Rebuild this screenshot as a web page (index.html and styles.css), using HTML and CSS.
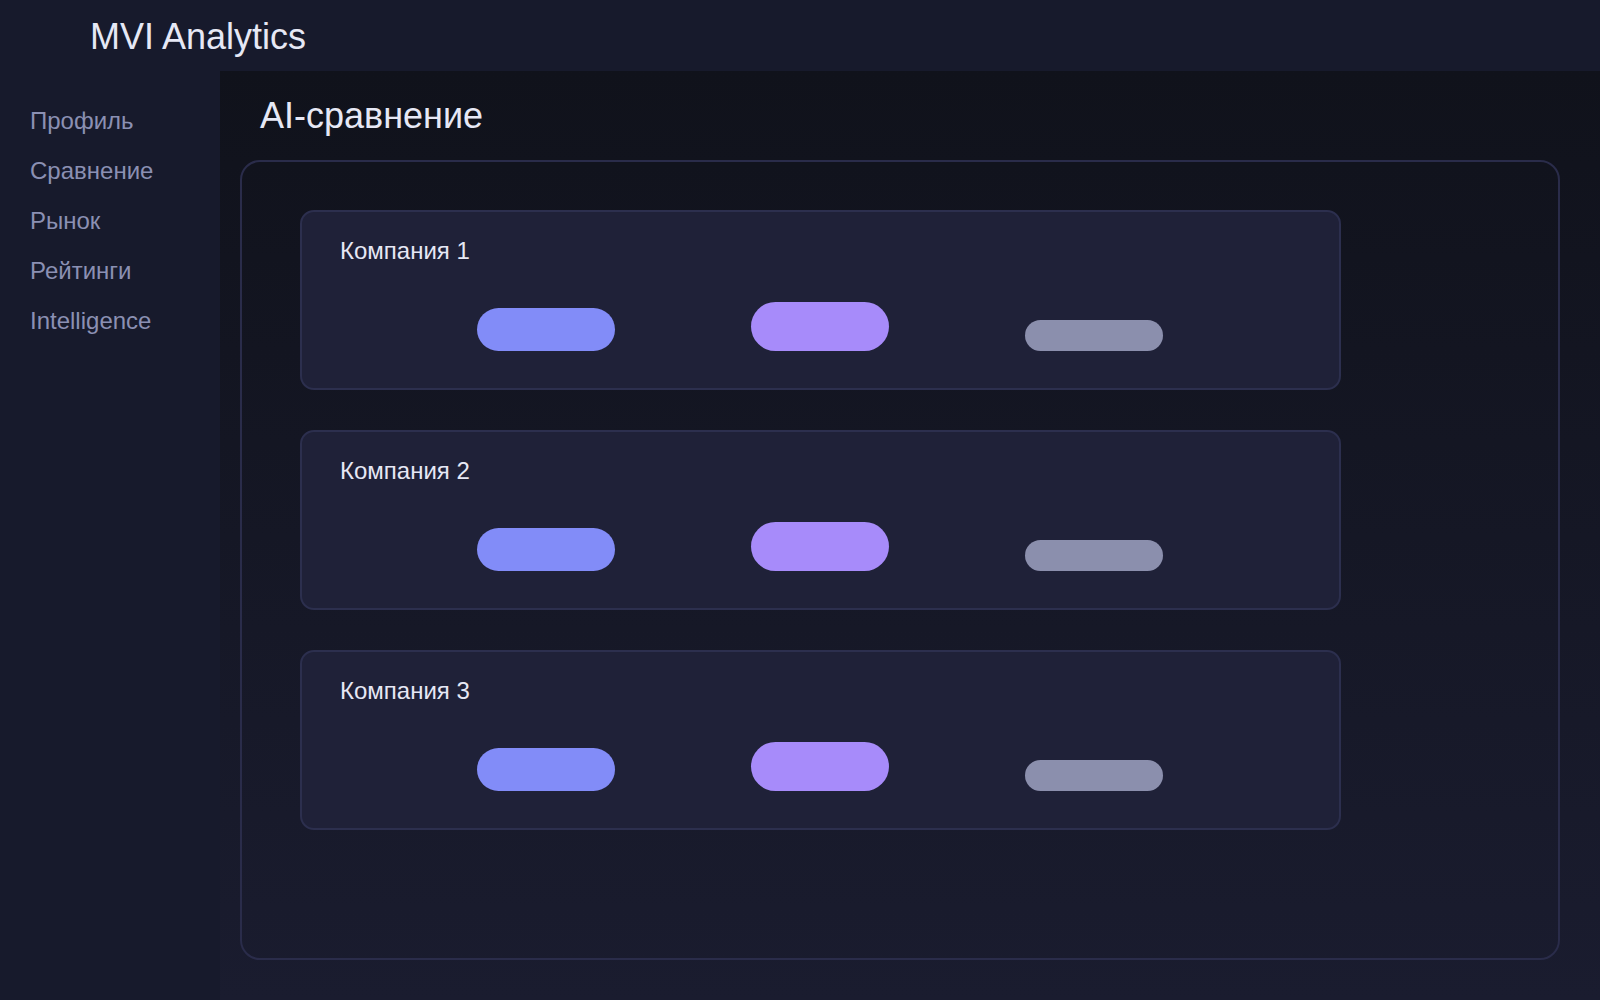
FILE: index.html
```html
<!DOCTYPE html>
<html lang="ru">
<head>
<meta charset="utf-8">
<title>MVI Analytics</title>
<link rel="stylesheet" href="styles.css">
</head>
<body>
<header class="topbar">
  <div class="brand">MVI Analytics</div>
</header>
<div class="layout">
  <nav class="sidebar">
    <a class="nav-item" href="#">Профиль</a>
    <a class="nav-item" href="#">Сравнение</a>
    <a class="nav-item" href="#">Рынок</a>
    <a class="nav-item" href="#">Рейтинги</a>
    <a class="nav-item" href="#">Intelligence</a>
  </nav>
  <main class="main">
    <h1 class="page-title">AI-сравнение</h1>
    <section class="panel">
      <div class="company-card">
        <div class="company-name">Компания 1</div>
        <div class="bars">
          <div class="bar bar-blue" style="height:43px"></div>
          <div class="bar bar-violet" style="height:49px"></div>
          <div class="bar bar-gray" style="height:31px"></div>
        </div>
      </div>
      <div class="company-card">
        <div class="company-name">Компания 2</div>
        <div class="bars">
          <div class="bar bar-blue" style="height:43px"></div>
          <div class="bar bar-violet" style="height:49px"></div>
          <div class="bar bar-gray" style="height:31px"></div>
        </div>
      </div>
      <div class="company-card">
        <div class="company-name">Компания 3</div>
        <div class="bars">
          <div class="bar bar-blue" style="height:43px"></div>
          <div class="bar bar-violet" style="height:49px"></div>
          <div class="bar bar-gray" style="height:31px"></div>
        </div>
      </div>
    </section>
  </main>
</div>
</body>
</html>
```

FILE: styles.css
```css
* {
  box-sizing: border-box;
}

html, body {
  margin: 0;
  padding: 0;
  height: 100%;
}

body {
  font-family: "Liberation Sans", Arial, sans-serif;
  background: #171a2c;
  color: #e6e8f5;
  display: flex;
  flex-direction: column;
  min-height: 1000px;
}

.topbar {
  height: 71px;
  flex: 0 0 71px;
  background: #171a2c;
  padding: 16px 0 0 90px;
}

.brand {
  font-size: 36px;
  line-height: 41px;
  color: #e6e8f5;
}

.layout {
  flex: 1;
  display: flex;
}

.sidebar {
  width: 220px;
  flex: 0 0 220px;
  background: #171a2c;
  padding: 25px 30px;
  display: flex;
  flex-direction: column;
}

.nav-item {
  display: block;
  height: 50px;
  line-height: 50px;
  font-size: 24px;
  color: #8b90b3;
  text-decoration: none;
}

.main {
  flex: 1;
  background: linear-gradient(180deg, #10121b 0%, #1a1c2f 100%);
  padding: 24px 40px 40px 20px;
  display: flex;
  flex-direction: column;
}

.page-title {
  margin: 0 0 24px 0;
  padding-left: 20px;
  font-size: 36px;
  line-height: 41px;
  font-weight: 400;
  color: #e6e8f5;
}

.panel {
  flex: 1;
  border: 2px solid #2a2c4a;
  border-radius: 20px;
  padding: 48px 58px;
  display: flex;
  flex-direction: column;
  gap: 40px;
}

.company-card {
  width: 1041px;
  height: 180px;
  background: #1f2138;
  border: 2px solid #2c2f4e;
  border-radius: 14px;
  padding: 25px 36px 0 38px;
}

.company-name {
  font-size: 24px;
  line-height: 28px;
  color: #e6e8f5;
}

.bars {
  margin-top: 37px;
  margin-left: -3px;
  height: 49px;
  display: flex;
  align-items: flex-end;
  justify-content: center;
  gap: 136px;
}

.bar {
  width: 138px;
  border-radius: 999px;
}

.bar-blue {
  background: #828cf8;
}

.bar-violet {
  background: #a78bfa;
}

.bar-gray {
  background: #8b8fad;
}
```
